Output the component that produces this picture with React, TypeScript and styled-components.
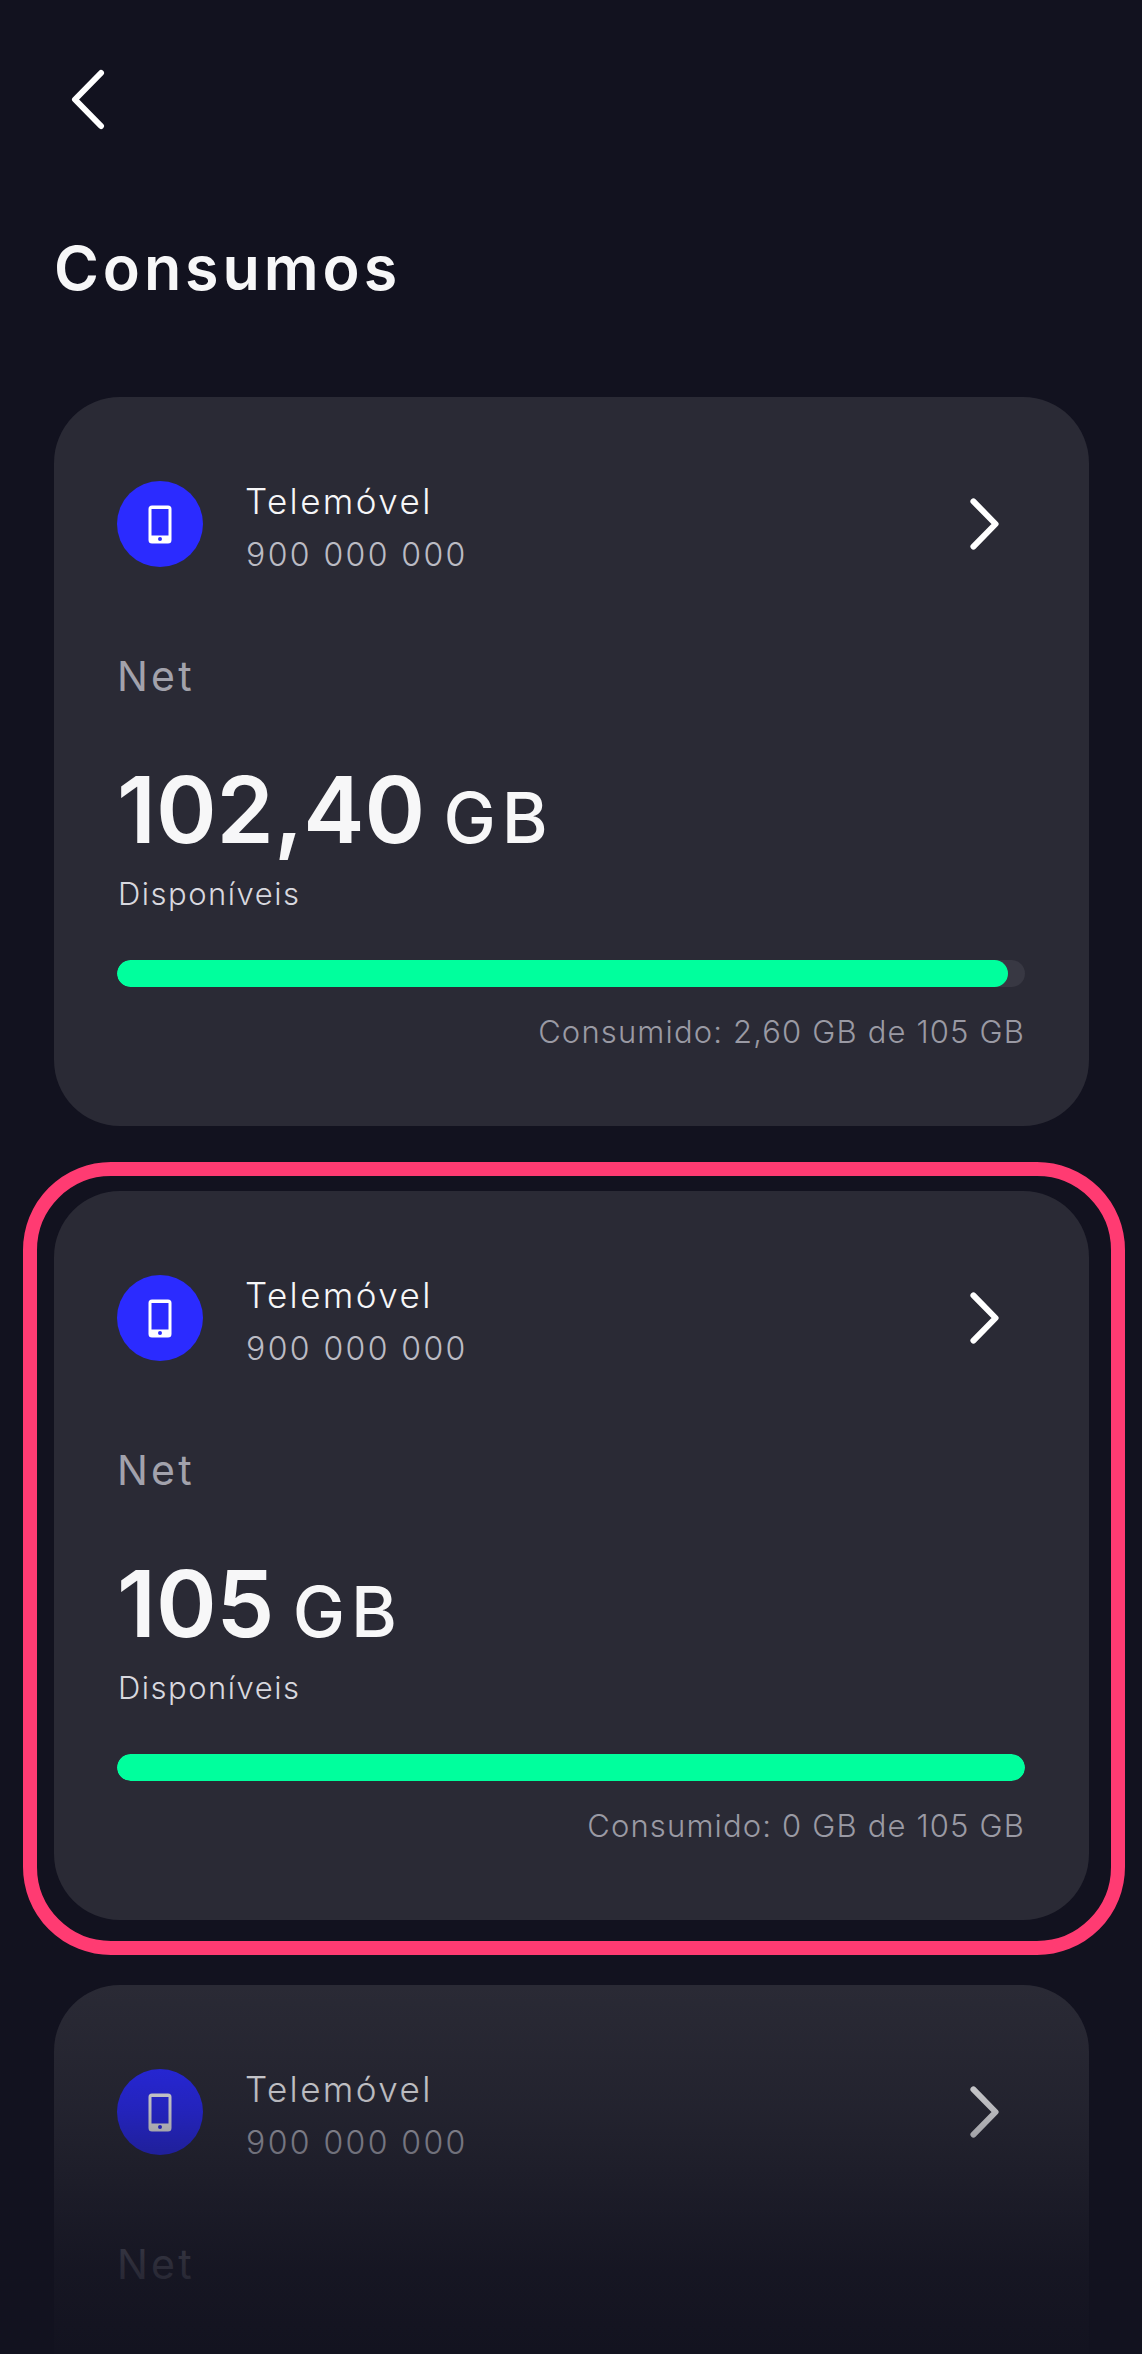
import { createGlobalStyle } from "styled-components";
import styled from "styled-components";

const usages = [
  { id: 1, amount: "102,40", used: "2,60", percent: 98.1, highlighted: false, partial: false },
  { id: 2, amount: "105", used: "0", percent: 100, highlighted: true, partial: false },
  // only the top of the third card is on screen, the rest is below the fold
  { id: 3, amount: "105", used: "0", percent: 100, highlighted: false, partial: true },
];

function Chevron({ flip, small }: { flip?: boolean; small?: boolean }) {
  return (
    <ChevronSvg viewBox="0 0 34 61" $flip={flip} $small={small} aria-hidden="true">
      <path
        d="M4 4 L30 30.5 L4 57"
        fill="none"
        stroke="#ffffff"
        strokeWidth={small ? 7 : 6}
        strokeLinecap="round"
        strokeLinejoin="round"
      />
    </ChevronSvg>
  );
}

function PhoneIcon() {
  return (
    <svg width="24" height="39" viewBox="0 0 24 39" aria-hidden="true">
      <path
        fillRule="evenodd"
        d="M4 0.5 H20 A3.5 3.5 0 0 1 23.5 4 V35 A3.5 3.5 0 0 1 20 38.5 H4 A3.5 3.5 0 0 1 0.5 35 V4 A3.5 3.5 0 0 1 4 0.5 Z M3.5 4 V30.5 H20.5 V4 Z M12 32 A2 2 0 1 0 12 36 A2 2 0 1 0 12 32 Z"
        fill="#ffffff"
      />
    </svg>
  );
}

export default function App() {
  return (
    <Page>
      <GlobalStyle />
      <BackButton aria-label="Voltar">
        <Chevron flip />
      </BackButton>
      <Title>Consumos</Title>
      <CardList>
        {usages.map((usage) => (
          <Card key={usage.id}>
            {usage.highlighted && <Highlight />}
            <Header>
              <IconCircle>
                <PhoneIcon />
              </IconCircle>
              <LineInfo>
                <LineName>Telemóvel</LineName>
                <LineNumber>900 000 000</LineNumber>
              </LineInfo>
              <Forward>
                <Chevron small />
              </Forward>
            </Header>
            <Label>Net</Label>
            {!usage.partial && (
              <>
                <Amount>
                  {usage.amount} <Unit>GB</Unit>
                </Amount>
                <Available>Disponíveis</Available>
                <Track>
                  <Fill style={{ width: `${usage.percent}%` }} />
                </Track>
                <Consumed>
                  Consumido: {usage.used} GB de 105 GB
                </Consumed>
              </>
            )}
          </Card>
        ))}
      </CardList>
      <BottomFade />
    </Page>
  );
}

const GlobalStyle = createGlobalStyle`
  html, body {
    margin: 0;
    padding: 0;
    background: #12121f;
  }
`;

const Page = styled.main`
  position: relative;
  width: 1142px;
  height: 2354px;
  overflow: hidden;
  padding: 69px 53px 0 54px;
  box-sizing: border-box;
  background: #12121f;
  color: #ffffff;
  font-family: Inter, "Liberation Sans", sans-serif;
`;

const BackButton = styled.div`
  display: flex;
  padding-left: 17px;
  height: 61px;
`;

const ChevronSvg = styled.svg<{ $flip?: boolean; $small?: boolean }>`
  display: block;
  width: ${(props) => (props.$small ? "29px" : "34px")};
  height: ${(props) => (props.$small ? "52px" : "61px")};
  transform: ${(props) => (props.$flip ? "scaleX(-1)" : "none")};
`;

const Title = styled.h1`
  margin: 103px 0 0;
  font-size: 61px;
  line-height: 70px;
  font-weight: 600;
  letter-spacing: 3.9px;
  color: #f7f7f8;
`;

const CardList = styled.div`
  display: flex;
  flex-direction: column;
  gap: 65px;
  margin-top: 94px;
`;

const Card = styled.section`
  position: relative;
  height: 729px;
  flex-shrink: 0;
  box-sizing: border-box;
  padding: 84px 64px 0 63px;
  border-radius: 66px;
  background: #2a2a35;
`;

const Highlight = styled.div`
  position: absolute;
  top: -29px;
  bottom: -35px;
  left: -31px;
  right: -36px;
  border: 14px solid #ff3b72;
  border-radius: 88px;
`;

const Header = styled.div`
  display: flex;
  align-items: center;
  height: 86px;
`;

const IconCircle = styled.div`
  display: flex;
  align-items: center;
  justify-content: center;
  width: 86px;
  height: 86px;
  border-radius: 50%;
  background: #2b2bff;
`;

const LineInfo = styled.div`
  margin: 6px 0 0 42px;
  display: flex;
  flex-direction: column;
`;

const LineName = styled.span`
  font-size: 35px;
  line-height: 40px;
  font-weight: 300;
  letter-spacing: 2.4px;
  color: #f6f6f8;
`;

const LineNumber = styled.span`
  margin-top: 16px;
  margin-left: 1px;
  font-size: 32px;
  line-height: 36px;
  font-weight: 300;
  letter-spacing: 2.4px;
  color: #bbbbc4;
`;

const Forward = styled.div`
  margin-left: auto;
  margin-right: 26px;
  display: flex;
`;

const Label = styled.div`
  margin-top: 87px;
  font-size: 41px;
  line-height: 44px;
  font-weight: 400;
  letter-spacing: 3.2px;
  color: #a2a2ac;
`;

const Amount = styled.div`
  margin-top: 62px;
  font-size: 92px;
  line-height: 100px;
  font-weight: 600;
  letter-spacing: 0;
  white-space: nowrap;
  color: #f7f7f8;
`;

const Unit = styled.span`
  margin-left: -5px;
  font-size: 70px;
  font-weight: 500;
  letter-spacing: 6px;
`;

const Available = styled.div`
  margin-top: 6px;
  margin-left: 1px;
  font-size: 31px;
  line-height: 40px;
  font-weight: 300;
  letter-spacing: 1.5px;
  color: #d8d8df;
`;

const Track = styled.div`
  margin-top: 46px;
  height: 27px;
  border-radius: 14px;
  background: #383843;
  overflow: hidden;
`;

const Fill = styled.div`
  height: 100%;
  border-radius: 14px;
  background: #00ff9d;
`;

const Consumed = styled.div`
  margin-top: 25px;
  text-align: right;
  font-size: 31px;
  line-height: 40px;
  font-weight: 300;
  letter-spacing: 1.15px;
  color: #9a9aa4;
`;

const BottomFade = styled.div`
  position: absolute;
  left: 0;
  right: 0;
  top: 1985px;
  bottom: 0;
  background: linear-gradient(
    to bottom,
    rgba(18, 18, 31, 0) 0,
    rgba(18, 18, 31, 0.3) 125px,
    rgba(18, 18, 31, 0.82) 280px,
    rgba(18, 18, 31, 0.96) 369px
  );
`;
